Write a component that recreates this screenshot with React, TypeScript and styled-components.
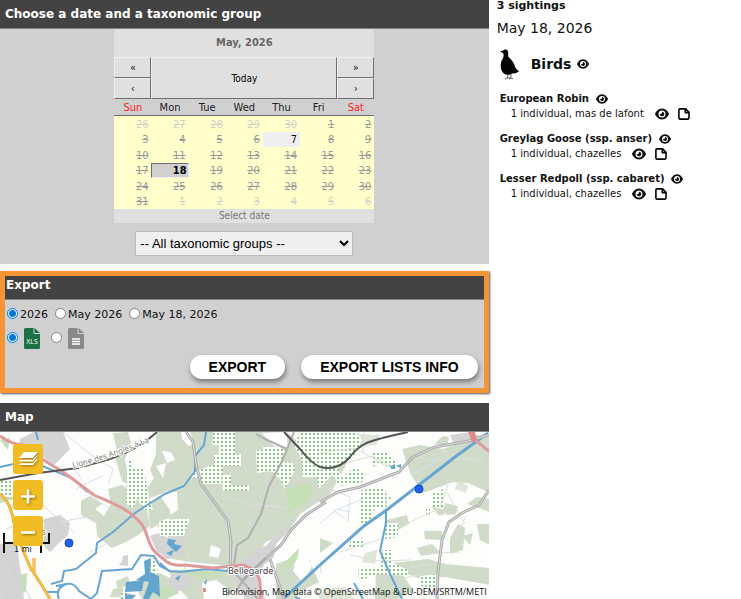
import React, { useState } from "react";
import styled, { createGlobalStyle, css } from "styled-components";
import { FaEye } from "react-icons/fa6";

const GlobalStyle = createGlobalStyle`
  * { box-sizing: border-box; }
  body {
    margin: 0;
    background: #fff;
    color: #111;
    font-family: "DejaVu Sans", Verdana, sans-serif;
    font-size: 11px;
    overflow: hidden;
  }
  button, input, select { margin: 0; font: inherit; }
`;

const Page = styled.div`
  display: grid;
  grid-template-columns: minmax(0, 2fr) minmax(0, 1fr);
  column-gap: 8px;
`;

const Column = styled.main`
  display: flex;
  flex-direction: column;
`;

const Heading = styled.h2<{ $compact?: boolean }>`
  margin: 0;
  padding: 0 5px;
  height: ${(p) => (p.$compact ? 24 : 29)}px;
  line-height: ${(p) => (p.$compact ? 18 : 28)}px;
  ${(p) => p.$compact && css`padding: 0 1px;`}
  background: #434343;
  border-bottom: 1px solid #858585;
  color: #fff;
  font-size: 12px;
  font-weight: bold;
`;

const Panel = styled.section`
  background: #d0d0d0;
  padding-bottom: 8px;
  display: flex;
  flex-direction: column;
`;

const Calendar = styled.table`
  width: 260px;
  align-self: center;
  border-collapse: separate;
  border-spacing: 0;
  table-layout: fixed;
  background: #e0e0e0;
  font-family: "DejaVu Sans Condensed", "DejaVu Sans", Tahoma, sans-serif;
  font-stretch: condensed;
  font-size: 11px;
  line-height: 14px;
  td, th { padding: 0; }
`;

const MonthTitle = styled.th`
  height: 28px;
  color: #666;
  font-family: "DejaVu Sans", sans-serif;
`;

const NavCell = styled.td`
  height: 21px;
  border: 1px solid;
  border-color: #efefef #707070 #707070 #efefef;
  text-align: center;
`;

const NavButton = styled.button`
  display: block;
  width: 100%;
  height: 19px;
  padding: 0;
  border: 0;
  background: transparent;
  font-size: 10px;
  line-height: 19px;
`;

const DayName = styled.th<{ $weekend?: boolean }>`
  height: 17px;
  background: #d0d0d0;
  border-bottom: 1px solid #707070;
  font-weight: normal;
  line-height: 16px;
  && { padding-top: 1px; line-height: 15px; }
  color: ${(p) => (p.$weekend ? "#f22" : "#222")};
`;

const Weeks = styled.tbody`
  background: #ffffcc;
  tr { height: 16px; }
  tr:nth-child(even) { height: 15px; }
`;

type DayKind = "other" | "off" | "open" | "selected";

const Day = styled.td<{ $kind: DayKind }>`
  && { padding-right: 3px; }
  line-height: 13px;
  text-align: right;
  color: ${(p) => (p.$kind === "other" ? "#d2d2c6" : "#999")};
  text-decoration: line-through;
  ${(p) => p.$kind === "open" && css`
    background: #efefef; color: #111; text-decoration: none;
  `}
  ${(p) => p.$kind === "selected" && css`
    background: #d0d0d0; color: #000; text-decoration: none; font-weight: bold;
    border: 1px solid; border-color: #707070 #efefef #efefef #707070;
    && { padding-right: 1px; }
  `}
`;

const Status = styled.td`
  height: 14px;
  color: #777;
  font-size: 10px;
  text-align: center;
`;

const GroupSelect = styled.select`
  align-self: center;
  width: 218px;
  height: 25px;
  margin-top: 8px;
  padding: 0;
  border: 1px solid #bbb;
  border-radius: 2px;
  background-color: #efefef;
  color: #000;
  font-family: "Liberation Sans", Arial, sans-serif;
  font-size: 13px;
`;

const ExportPanel = styled.section`
  margin: 7px 0 10px;
  border: 5px solid #f79433;
  background: #d0d0d0;
  box-shadow: 1px 1px 2px #555;
`;

const Options = styled.div`
  display: flex;
  align-items: center;
  height: 24px;
  padding-left: 2px;
  gap: 7px;
`;

const Choices = styled.form`
  padding-top: 2px;
`;

const Option = styled.label`
  display: flex;
  align-items: center;
  gap: 2px;
`;

const FormatOption = styled(Option)`
  gap: 6px;
  margin-right: 4px;
`;

const Radio = styled.input`
  appearance: none;
  width: 11px;
  height: 11px;
  margin-top: -2px;
  border: 1px solid #858585;
  border-radius: 50%;
  background: #fff;
  &:checked {
    border-color: #0075e0;
    background: radial-gradient(circle, #0075e0 0 3px, #fff 4px);
    box-shadow: 0 0 0 1px #b8d4ee;
  }
`;

const Actions = styled.div`
  display: flex;
  justify-content: flex-end;
  gap: 16px;
  padding: 5px 6px 9px;
`;

const PillButton = styled.button`
  height: 24px;
  padding: 0 19px;
  border: 0;
  border-radius: 12px;
  background: #fff;
  box-shadow: 1px 3px 5px #777;
  color: #000;
  font: bold 14px "Liberation Sans", Arial, sans-serif;
  white-space: nowrap;
`;

const MapFrame = styled.div`
  position: relative;
  overflow: hidden;
`;

const MapDrawing = styled.svg`
  display: block;
  width: 100%;
  height: 167px;
`;

const MapTools = styled.div`
  position: absolute;
  top: 12px;
  left: 13px;
  display: flex;
  flex-direction: column;
  gap: 6px;
`;

const MapButton = styled.button`
  width: 30px;
  height: 30px;
  padding: 0;
  border: 0;
  border-radius: 3px;
  background: #f2bd23;
  svg { display: block; filter: drop-shadow(1px 1px 1px #8a6b10); }
`;

const Attribution = styled.p`
  position: absolute;
  right: 2px;
  bottom: 1px;
  margin: 0;
  font-family: "Open Sans", sans-serif;
  font-size: 9px;
  line-height: 12px;
  white-space: nowrap;
`;

const Sidebar = styled.aside`
  line-height: 14px;
`;

const Count = styled.div`
  height: 16px;
  line-height: 12px;
  font-weight: bold;
`;

const DateLine = styled.div`
  height: 24px;
  line-height: 24px;
  font-size: 14px;
`;

const GroupTitle = styled.h3`
  display: flex;
  align-items: center;
  height: 32px;
  margin: 8px 0 12px 3px;
  font-size: 14px;
  gap: 6px;
  svg:first-child { margin-right: 6px; }
`;

const Species = styled.article`
  height: 40px;
  margin-left: 3px;
  &:last-child { height: 32px; }
`;

const SpeciesName = styled.h4`
  display: flex;
  align-items: center;
  gap: 7px;
  height: 14px;
  margin: 0;
  font-size: 10px;
  white-space: nowrap;
`;

const Sighting = styled.div`
  display: flex;
  align-items: center;
  height: 16px;
  margin-left: 11px;
  font-size: 10px;
  gap: 9px;
  white-space: nowrap;
  svg:first-of-type { margin-left: 2px; }
`;

const NoteIcon = () => (
  <svg width="12" height="12" viewBox="0 0 12 12" fill="none" stroke="#000" strokeWidth="1.6" strokeLinejoin="round">
    <path d="M1.8.9H7.6L11 4.3V10.1Q11 11.1 10 11.1H1.8Q.9 11.1 .9 10.1V1.9Q.9.9 1.8.9Z" />
    <path d="M7.3 1V4.6H11" />
  </svg>
);

const BirdIcon = () => (
  <svg width="19" height="31" viewBox="0 0 19 31" fill="#050505">
    <path d="M0 2.5 2.8 1.8C4.2-.3 7.3 0 8 2.2 8.6 4.2 7.7 6 8.5 8 11.5 10.2 14.2 14 15.5 19L19 22.5 15.5 24.2 12 24.5C10 26.3 6 26.2 3.5 24.2 1.3 22.5.5 19 .8 15 1 11.5 3.6 9.3 3.7 6.8 3.7 5.3 3.3 4.3 2.5 3.7Z" />
    <path d="M8 25 7.4 29 5 30M7.4 29H10M11 24.5 10.8 29 8.8 30M10.8 29 13 29.8" fill="none" stroke="#333" strokeWidth=".8" />
  </svg>
);

const FileIcon = ({ kind }: { kind: "xls" | "text" }) => (
  <svg width="16" height="21" viewBox="0 0 16 21">
    <path d="M1.5 0H9.5V6H16V19.5Q16 21 14.5 21H1.5Q0 21 0 19.5V1.5Q0 0 1.5 0Z" fill={kind === "xls" ? "#1d7044" : "#898989"} />
    <path d="M10.5 0 16 5H10.5Z" fill={kind === "xls" ? "#1d7044" : "#898989"} />
    {kind === "xls" ? (
      <text x="8" y="16" textAnchor="middle" fill="#fff" fontFamily="Open Sans, sans-serif" fontSize="7">XLS</text>
    ) : (
      <path d="M4 11H12M4 13.5H12M4 16H12" stroke="#fff" strokeWidth="1.3" />
    )}
  </svg>
);

const LayersIcon = () => (
  <svg width="30" height="30" viewBox="0 0 30 30" fill="#fff">
    <path d="M11 8H25L20 14H6Z" />
    <path d="M8 15.5 6 17.5H20L25 11.5 24 11.3 19.8 15.8H8ZM8 19 6 21H20L25 15 24 14.8 19.8 19.3H8Z" />
  </svg>
);

const Sign = ({ plus }: { plus?: boolean }) => (
  <svg width="30" height="30" viewBox="0 0 30 30" stroke="#fff" strokeWidth="2.6">
    <path d={plus ? "M8 16.5H22M15 9.5V23.5" : "M8 16.5H22"} />
  </svg>
);

const TerrainMap = () => (
  <MapDrawing viewBox="0 0 490 167" preserveAspectRatio="xMinYMin slice" role="img" aria-label="Map of Bellegarde">
    <defs>
      <pattern id="orchard" width="4" height="4" patternUnits="userSpaceOnUse">
        <rect width="4" height="4" fill="#fcfefb" />
        <rect x="1" y="1" width="2" height="2" fill="#8cc58a" />
      </pattern>
      <path id="railLabel" d="M73 36Q113 27 165 3" />
    </defs>
    <rect width="490" height="167" fill="#fdfdfc" />
    <g fill="#d0dbc9">
      <path d="M156 0H287L318 28 345 0H356L345 35 330 62 300 82 288 100 266 110 254 126 232 134 190 130 166 126 172 106 165 86 178 78 177 60 160 58 150 38 156 22Z" />
      <path d="M113 1 128 0 132 14 117 19ZM113 18 128 17 125 28 129 48 148 55 165 30 166 60 150 66 137 58 122 49Z" />
      <path d="M81 69 90 64 102 72 95 77 104 84 111 72 108 57 122 53 134 61 146 74 150 94 138 103 126 110 112 116 97 104 96 91 81 83Z" />
      <path d="M20 8 34 0 30 18 15 22ZM36 1H45L52 9 44 18ZM148 75 160 64 170 78V107L158 93 150 97Z" />
      <path d="M402 17 420 13 443 17 462 10 476 3H490V61L468 51 453 50 423 61 411 43ZM434 12 443 4 449 5 447 14Z" />
      <path d="M320 106 333 111 320 121ZM387 88 407 83 409 92 396 99 385 94ZM394 131 428 127 445 132 490 136V153L445 145 418 146 391 136ZM432 76 441 70 458 74 456 82 440 84ZM424 99 442 99V108L425 107ZM450 106 458 92 465 96 463 118 450 122ZM417 116 432 112 441 121 421 124ZM462 104 473 101 470 113ZM376 139 400 139 414 159 398 167H375ZM467 72 477 65 490 67V80ZM477 92H490V113L480 108ZM474 33 490 38V48L472 46Z" />
      <path d="M276 132 287 128 299 135 309 128 319 150 305 157 294 167H276ZM168 138 200 138 234 140 242 150 225 167H189L176 154ZM160 141 170 146 179 161 167 167H142L133 151ZM116 149 128 144 130 153 117 156ZM113 157 123 155 124 165H110Z" />
      <path d="M458 48 468 54 466 61 455 57ZM359 2 380 3 376 13 357 15ZM365 121 377 118 375 132 362 130ZM319 157 345 155 354 167H319Z" opacity=".7" />
    </g>
    <g fill="#c4e0b4">
      <path d="M285 58 310 51 312 60 305 72 294 76 286 87 289 73ZM285 130 299 116 297 129 286 139ZM14 145 27 141 26 159 17 167 15 156ZM0 54 12 48 14 67 0 71ZM0 8 10 6 8 18Z" />
      <path d="M169 138 204 137 227 142 211 148 193 144 178 151ZM160 156 169 153 177 162 166 167H158Z" opacity=".7" />
    </g>
    <g fill="#d4d4d4">
      <path d="M20 7 34 0H63L70 17 53 34 40 22 20 26ZM44 87 60 83 70 91 68 103 59 111 50 120 44 114Z" />
      <path d="M230 134 245 128 258 116 276 111 274 125 264 133 258 145 265 167H245L233 146ZM266 114 281 97 289 91 286 102 272 116Z" />
      <path d="M450 3 472 0 477 4 455 14ZM168 105 181 103 184 112 182 124 166 127 157 118ZM171 143 184 140 191 147 188 156 177 160 168 153Z" />
      <path d="M0 112H17L24 167H0ZM150 104 158 101 170 107 169 122 157 120ZM123 124 128 123V134L119 133 122 129Z" />
    </g>
    <g fill="#fff">
      <path d="M181 0H190L194 12 189 14 182 7ZM162 19 171 20 175 28 167 31ZM262 1 286 0 288 16 274 14ZM296 128 305 123 312 134 303 151 293 139ZM211 113 221 117 218 126 209 124ZM202 151 216 148 227 156 226 167H204ZM156 34 166 31 163 46Z" />
      <path d="M422 68 433 64 446 69 443 78ZM433 86 446 81 452 91 436 94Z" opacity=".8" />
    </g>
    <g fill="url(#orchard)">
      <path d="M214 0H235V22H241V34H223V43H231V53H249V59H223V52H199V46H190L192 40 214 33V23H219V13H212Z" />
      <path d="M127 28H132V35H144L147 56 153 78 145 78 137 67 133 76 126 72ZM163 88 190 86 184 104H160V94ZM158 90 169 86V101L160 103ZM122 160 130 158 129 167H120Z" />
      <path d="M256 18H263V15H280L287 21 281 30H292L295 38 290 48 285 57 280 46 270 39 257 41Z" />
      <path d="M300 0H356L362 8 353 27 337 34 342 46 354 35 366 42 361 52 340 54 332 43 319 57 317 45H302V28L294 14Z" />
      <path d="M373 21H387L398 32 392 38 382 32 371 35ZM361 58 383 56 391 66 386 76 374 76 371 92H361ZM350 109 365 106V117H348ZM384 91H398V105L385 107ZM382 118 391 118 393 131 408 138V144L376 142 359 149 358 138 380 135ZM420 144 438 142 438 156 420 154ZM432 62 443 57V77L432 75ZM0 48H13V65H0ZM147 128 156 125 158 142 150 143ZM426 75H430V85H426Z" />
    </g>
    <g fill="none" stroke="#dedede" strokeWidth="1">
      <path d="M63 0 79 13 93 24 113 37 108 52M73 35 82 48M78 54 113 79 143 85M39 70 75 101M76 57 102 44M60 90 91 84M90 120 110 110M190 116 184 138M222 42 222 63 250 72 276 74M242 84 260 99M262 74 287 76M320 53 350 65 348 90M320 38 372 24 391 34M364 0 363 20M319 21 355 16 388 35M340 120 387 105M402 94 440 76 448 53M430 15 485 32M390 150 420 142M447 60 465 92M410 135 445 131M456 105 466 84M409 20 430 29 484 26M420 122 459 120M350 123 379 129 411 128M386 58 385 97M467 3 488 15" />
      <path d="M7 97 20 90 60 87M45 95 53 101 41 111M14 100 14 167M4 109 7 167M8 127 31 167" stroke="#cfcfda" />
    </g>
    <g fill="none" stroke="#cfe4ee">
      <path d="M320 91 338 77 363 67M410 43 432 32 443 22M338 77 350 80M320 127 321 141M333 78 345 87" />
    </g>
    <g fill="none" stroke="#68a5d2" strokeWidth="2">
      <path d="M0 35 18 31 40 33 72 46 88 60M36 0 38 8M206 0 204 13 195 24 195 39 184 54 165 62 152 70 135 81 113 100 97 111 96 121 76 137 64 139 62 149 51 152" />
      <path d="M56 154C66 153 72 147 79 159L91 167M59 167C56 160 59 155 66 152M91 167 97 161 102 139 132 137 141 123 154 124 160 134 170 139M46 160 58 160M160 131 169 139 181 140 206 137 227 139 230 134" />
      <path d="M386 78 386 91 380 119 391 144 402 167M354 151 363 167M295 165 300 167" />
      <path d="M283 167 320 133 364 94 388 77 455 25 488 1" strokeWidth="3" />
    </g>
    <g fill="#64a5ce">
      <path d="M144 129 151 126 150 140 159 144 160 165 153 160 149 167H143L149 150 136 148 145 142ZM126 150 144 148 142 159 125 160ZM125 162 136 163 132 167H125ZM168 107 176 108 174 112 182 114 176 120 167 112ZM166 121 174 118 171 124ZM391 34 395 32V37H391ZM396 34 401 32 401 36Z" />
      <path d="M204 151 207 146 206 153ZM175 146 181 143 178 149Z" />
    </g>
    <g fill="none">
      <path d="M186 0 193 10 196 32 201 52 228 89 231 109 230 137M326 70 306 83 291 98 281 113 266 126 242 149M320 70 338 60 360 55 399 40 413 25 435 15 469 9 489 3M489 58 479 73 462 81 449 90 442 108 438 140 437 167M270 127 284 167" stroke="#acacac" strokeWidth="3" />
      <path d="M294 0 282 29 269 54 261 82 248 106 237 113 234 132M256 2 265 7 287 17M236 142 258 167M243 148 236 160" stroke="#b0b0b0" strokeWidth="2" />
      <path d="M186 0 193 10 196 32 201 52 228 89 231 109 230 137M326 70 306 83 291 98 281 113 266 126M320 70 338 60 360 55 399 40 413 25 435 15 469 9 489 3M489 58 479 73 462 81 449 90 442 108 438 140 437 167M270 127 284 167" stroke="#dedede" />
      <path d="M0 4Q12 13 24 13C36 24 45 30 62 39L94 63C112 71 126 76 137 87 150 99 145 110 156 121L167 130Q173 134 185 133L213 136 242 133Q258 137 260 150L261 167M471 0 475 8 490 20" stroke="#e09a9b" strokeWidth="3" />
      <path d="M0 62C8 68 12 78 14 91L20 111 30 135 41 152 50 167M34 126V138L30 137" stroke="#dda04a" strokeWidth="3" />
      <path d="M0 62C8 68 12 78 14 91L20 111 30 135 41 152 50 167M34 126V138L30 137" stroke="#f7c143" strokeWidth="2" />
      <path d="M0 48 38 41 78 36 110 27Q139 17 157 0M284 0 300 17Q311 31 320 35 338 39 349 26C362 9 370 9 408 0" stroke="#555" strokeWidth="2" />
      <path d="M4 101V121M4 111H49V101M41 110V121" stroke="#111" strokeWidth="2" />
    </g>
    <path d="M468 0H475L477 8 472 10ZM203 156H206V160H203Z" fill="#e08b8d" />
    <g fontFamily="Noto Sans, sans-serif" fill="#777" stroke="#fff" strokeWidth="2" paintOrder="stroke" strokeLinejoin="round">
      <text fontSize="8"><textPath href="#railLabel">Ligne des Angles à La</textPath></text>
      <text x="228" y="142" fontSize="9" fill="#444">Bellegarde</text>
      <text x="42" y="103" fontSize="8">s</text>
    </g>
    <text x="14" y="120" fontSize="8" fontFamily="DejaVu Sans, sans-serif" fill="#111">1 mi</text>
    <g fill="#2161f5" stroke="#1445a8" strokeWidth="1">
      <circle cx="69" cy="111" r="4" />
      <circle cx="419" cy="57" r="4" />
    </g>
  </MapDrawing>
);

const DAYS = ["Sun", "Mon", "Tue", "Wed", "Thu", "Fri", "Sat"];
const CELLS = [
  26, 27, 28, 29, 30, ...Array.from({ length: 31 }, (_, i) => i + 1), 1, 2, 3, 4, 5, 6,
];

const dayKind = (index: number): DayKind => {
  if (index < 5 || index > 35) return "other";
  if (CELLS[index] === 7) return "open";
  if (CELLS[index] === 18) return "selected";
  return "off";
};

const PERIODS = ["2026", "May 2026", "May 18, 2026"];
const SPECIES = [
  { name: "European Robin", place: "mas de lafont" },
  { name: "Greylag Goose (ssp. anser)", place: "chazelles" },
  { name: "Lesser Redpoll (ssp. cabaret)", place: "chazelles" },
];

export default function App() {
  const [period, setPeriod] = useState("2026");
  const [format, setFormat] = useState("xls");

  return (
    <>
      <GlobalStyle />
      <Page>
        <Column>
          <Panel>
            <Heading>Choose a date and a taxonomic group</Heading>
            <Calendar>
              <thead>
                <tr><MonthTitle colSpan={7}>May, 2026</MonthTitle></tr>
                <tr>
                  <NavCell><NavButton aria-label="Previous year">«</NavButton></NavCell>
                  <NavCell colSpan={5} rowSpan={2}><NavButton>Today</NavButton></NavCell>
                  <NavCell><NavButton aria-label="Next year">»</NavButton></NavCell>
                </tr>
                <tr>
                  <NavCell><NavButton aria-label="Previous month">‹</NavButton></NavCell>
                  <NavCell><NavButton aria-label="Next month">›</NavButton></NavCell>
                </tr>
                <tr>
                  {DAYS.map((d, i) => <DayName key={d} $weekend={i % 6 === 0}>{d}</DayName>)}
                </tr>
              </thead>
              <Weeks>
                {[0, 1, 2, 3, 4, 5].map((w) => (
                  <tr key={w}>
                    {CELLS.slice(w * 7, w * 7 + 7).map((d, i) => (
                      <Day key={i} $kind={dayKind(w * 7 + i)}>{d}</Day>
                    ))}
                  </tr>
                ))}
              </Weeks>
              <tfoot><tr><Status colSpan={7}>Select date</Status></tr></tfoot>
            </Calendar>
            <GroupSelect aria-label="Taxonomic group"><option>-- All taxonomic groups --</option></GroupSelect>
          </Panel>

          <ExportPanel>
            <Heading $compact>Export</Heading>
            <Choices>
              <Options>
                {PERIODS.map((p) => (
                  <Option key={p}>
                    <Radio type="radio" name="period" checked={period === p} onChange={() => setPeriod(p)} />
                    {p}
                  </Option>
                ))}
              </Options>
              <Options>
                {(["xls", "text"] as const).map((f) => (
                  <FormatOption key={f}>
                    <Radio type="radio" name="format" aria-label={f} checked={format === f} onChange={() => setFormat(f)} />
                    <FileIcon kind={f} />
                  </FormatOption>
                ))}
              </Options>
            </Choices>
            <Actions>
              <PillButton>EXPORT</PillButton>
              <PillButton>EXPORT LISTS INFO</PillButton>
            </Actions>
          </ExportPanel>

          <section>
            <Heading>Map</Heading>
            <MapFrame>
              <TerrainMap />
              <MapTools>
                <MapButton aria-label="Layers"><LayersIcon /></MapButton>
                <MapButton aria-label="Zoom in"><Sign plus /></MapButton>
                <MapButton aria-label="Zoom out"><Sign /></MapButton>
              </MapTools>
              <Attribution>Biolovision, Map data © OpenStreetMap &amp; EU-DEM/SRTM/METI</Attribution>
            </MapFrame>
          </section>
        </Column>

        <Sidebar>
          <Count>3 sightings</Count>
          <DateLine>May 18, 2026</DateLine>
          <GroupTitle><BirdIcon />Birds<FaEye size={12} /></GroupTitle>
          {SPECIES.map((s) => (
            <Species key={s.name}>
              <SpeciesName>{s.name}<FaEye size={12} /></SpeciesName>
              <Sighting>1 individual, {s.place}<FaEye size={14} /><NoteIcon /></Sighting>
            </Species>
          ))}
        </Sidebar>
      </Page>
    </>
  );
}
